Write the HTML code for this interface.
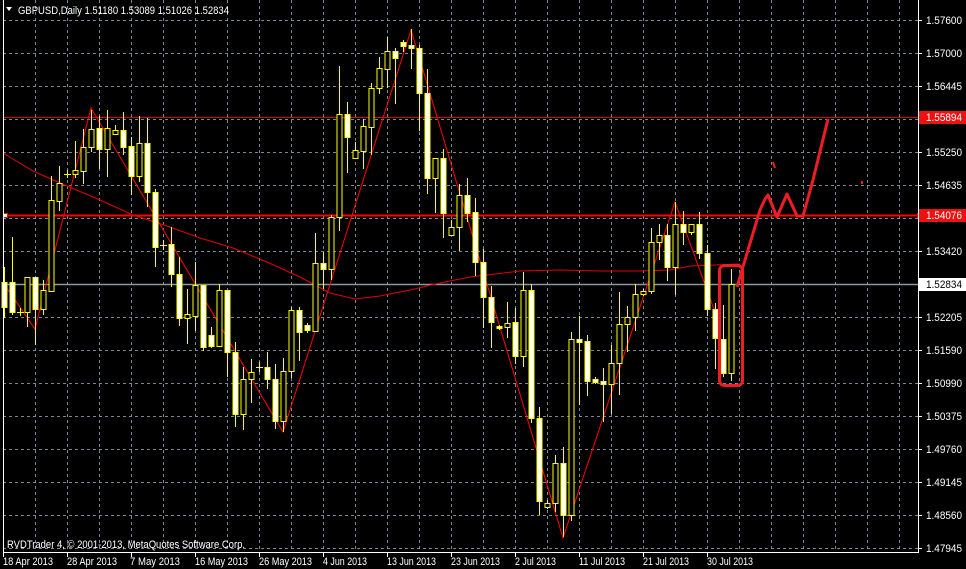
<!DOCTYPE html>
<html><head><meta charset="utf-8"><style>
html,body{margin:0;padding:0;background:#000;}
body{width:966px;height:569px;overflow:hidden;position:relative;font-family:"Liberation Sans",sans-serif;}
svg{position:absolute;left:0;top:0;}
text{font-family:"Liberation Sans",sans-serif;font-size:11px;fill:#fff;}
.g{stroke:#7b8894;stroke-width:1;stroke-dasharray:3,3;}
.wk{stroke:#ffff00;stroke-width:1;}
.w{fill:#fff;stroke:#ffff00;stroke-width:1;}
.h{fill:#000;stroke:#ffff00;stroke-width:1;}
</style></head><body>
<svg width="966" height="569" viewBox="0 0 966 569" xmlns="http://www.w3.org/2000/svg">
<g class="g">
<line x1="3" y1="20.5" x2="918" y2="20.5"/><line x1="3" y1="53.5" x2="918" y2="53.5"/><line x1="3" y1="86.5" x2="918" y2="86.5"/><line x1="3" y1="152.5" x2="918" y2="152.5"/><line x1="3" y1="185.5" x2="918" y2="185.5"/><line x1="3" y1="218.5" x2="918" y2="218.5"/><line x1="3" y1="251.5" x2="918" y2="251.5"/><line x1="3" y1="317.5" x2="918" y2="317.5"/><line x1="3" y1="350.5" x2="918" y2="350.5"/><line x1="3" y1="383.5" x2="918" y2="383.5"/><line x1="3" y1="416.5" x2="918" y2="416.5"/><line x1="3" y1="449.5" x2="918" y2="449.5"/><line x1="3" y1="482.5" x2="918" y2="482.5"/><line x1="3" y1="515.5" x2="918" y2="515.5"/><line x1="3" y1="548.5" x2="918" y2="548.5"/>
<line x1="3" y1="119.5" x2="918" y2="119.5"/>
<line x1="35.5" y1="0" x2="35.5" y2="552"/><line x1="67.5" y1="0" x2="67.5" y2="552"/><line x1="99.5" y1="0" x2="99.5" y2="552"/><line x1="131.5" y1="0" x2="131.5" y2="552"/><line x1="163.5" y1="0" x2="163.5" y2="552"/><line x1="195.5" y1="0" x2="195.5" y2="552"/><line x1="227.5" y1="0" x2="227.5" y2="552"/><line x1="259.5" y1="0" x2="259.5" y2="552"/><line x1="291.5" y1="0" x2="291.5" y2="552"/><line x1="323.5" y1="0" x2="323.5" y2="552"/><line x1="355.5" y1="0" x2="355.5" y2="552"/><line x1="387.5" y1="0" x2="387.5" y2="552"/><line x1="419.5" y1="0" x2="419.5" y2="552"/><line x1="451.5" y1="0" x2="451.5" y2="552"/><line x1="483.5" y1="0" x2="483.5" y2="552"/><line x1="515.5" y1="0" x2="515.5" y2="552"/><line x1="547.5" y1="0" x2="547.5" y2="552"/><line x1="579.5" y1="0" x2="579.5" y2="552"/><line x1="611.5" y1="0" x2="611.5" y2="552"/><line x1="643.5" y1="0" x2="643.5" y2="552"/><line x1="675.5" y1="0" x2="675.5" y2="552"/><line x1="707.5" y1="0" x2="707.5" y2="552"/><line x1="739.5" y1="0" x2="739.5" y2="552"/><line x1="771.5" y1="0" x2="771.5" y2="552"/><line x1="803.5" y1="0" x2="803.5" y2="552"/><line x1="835.5" y1="0" x2="835.5" y2="552"/><line x1="867.5" y1="0" x2="867.5" y2="552"/><line x1="899.5" y1="0" x2="899.5" y2="552"/>
</g>
<line x1="3" y1="117.5" x2="918" y2="117.5" stroke="#e00000" stroke-width="1"/>
<line x1="3" y1="215.5" x2="918" y2="215.5" stroke="#ff0000" stroke-width="2"/>
<line x1="3" y1="284.5" x2="918" y2="284.5" stroke="#8a96a2" stroke-width="1.5"/>
<rect x="3.5" y="213.5" width="4" height="4" fill="#fff" stroke="#f00"/>
<rect x="917.5" y="213.5" width="4" height="4" fill="#fff" stroke="#f00"/>
<polyline fill="none" stroke="#e00000" stroke-width="1" points="3,153 33,171 67,186 100,200 133,215 167,226 200,238 233,248 267,262 300,277 330,293 355,299 380,296 410,290 440,283 470,277 487,275 520,271 560,270 600,271 640,271 670,270 690,266 740,264"/>
<polyline fill="none" stroke="#ff0000" stroke-width="1" points="6,287 35,329 91,108 283,432 411,30 563,538 675,202 715,312"/>
<g>
<line class="wk" x1="4.5" y1="267" x2="4.5" y2="318"/><rect class="w" x="2" y="282.5" width="5" height="25"/>
<line class="wk" x1="12.5" y1="237" x2="12.5" y2="315"/><rect class="w" x="10" y="282.5" width="5" height="30"/>
<line class="wk" x1="20.5" y1="308" x2="20.5" y2="316"/><line class="wk" x1="17" y1="312.5" x2="24" y2="312.5"/>
<line class="wk" x1="27.5" y1="277" x2="27.5" y2="327"/><rect class="h" x="25" y="277.5" width="5" height="35"/>
<line class="wk" x1="35.5" y1="280" x2="35.5" y2="345"/><rect class="w" x="33" y="277.5" width="5" height="32"/>
<line class="wk" x1="43.5" y1="280" x2="43.5" y2="315"/><rect class="h" x="41" y="290.5" width="5" height="19"/>
<line class="wk" x1="51.5" y1="176" x2="51.5" y2="291"/><rect class="h" x="49" y="200.5" width="5" height="91"/>
<line class="wk" x1="59.5" y1="166" x2="59.5" y2="211"/><rect class="h" x="57" y="183.5" width="5" height="18"/>
<line class="wk" x1="67.5" y1="170" x2="67.5" y2="178"/><line class="wk" x1="64" y1="174.5" x2="71" y2="174.5"/>
<line class="wk" x1="75.5" y1="141" x2="75.5" y2="178"/><rect class="h" x="73" y="170.5" width="5" height="4"/>
<line class="wk" x1="83.5" y1="129" x2="83.5" y2="184"/><rect class="h" x="81" y="147.5" width="5" height="24"/>
<line class="wk" x1="91.5" y1="110" x2="91.5" y2="152"/><rect class="h" x="89" y="129.5" width="5" height="18"/>
<line class="wk" x1="99.5" y1="116" x2="99.5" y2="169"/><rect class="w" x="97" y="128.5" width="5" height="21"/>
<line class="wk" x1="107.5" y1="110" x2="107.5" y2="177"/><rect class="h" x="105" y="128.5" width="5" height="21"/>
<line class="wk" x1="115.5" y1="125" x2="115.5" y2="135"/><rect class="h" x="113" y="130.5" width="5" height="4"/>
<line class="wk" x1="123.5" y1="112" x2="123.5" y2="155"/><rect class="w" x="121" y="130.5" width="5" height="17"/>
<line class="wk" x1="131.5" y1="137" x2="131.5" y2="195"/><rect class="w" x="129" y="146.5" width="5" height="30"/>
<line class="wk" x1="139.5" y1="116" x2="139.5" y2="182"/><rect class="h" x="137" y="143.5" width="5" height="33"/>
<line class="wk" x1="147.5" y1="118" x2="147.5" y2="207"/><rect class="w" x="145" y="143.5" width="5" height="49"/>
<line class="wk" x1="155.5" y1="189" x2="155.5" y2="267"/><rect class="w" x="153" y="192.5" width="5" height="55"/>
<line class="wk" x1="163.5" y1="240" x2="163.5" y2="250"/><line class="wk" x1="160" y1="245.5" x2="167" y2="245.5"/>
<line class="wk" x1="171.5" y1="227" x2="171.5" y2="287"/><rect class="w" x="169" y="244.5" width="5" height="30"/>
<line class="wk" x1="179.5" y1="257" x2="179.5" y2="326"/><rect class="w" x="177" y="274.5" width="5" height="44"/>
<line class="wk" x1="187.5" y1="289" x2="187.5" y2="344"/><rect class="h" x="185" y="314.5" width="5" height="4"/>
<line class="wk" x1="195.5" y1="262" x2="195.5" y2="331"/><rect class="h" x="193" y="285.5" width="5" height="31"/>
<line class="wk" x1="203.5" y1="285" x2="203.5" y2="351"/><rect class="w" x="201" y="285.5" width="5" height="62"/>
<line class="wk" x1="211.5" y1="327" x2="211.5" y2="348"/><rect class="w" x="209" y="335.5" width="5" height="11"/>
<line class="wk" x1="219.5" y1="284" x2="219.5" y2="346"/><rect class="h" x="217" y="290.5" width="5" height="56"/>
<line class="wk" x1="227.5" y1="290" x2="227.5" y2="377"/><rect class="w" x="225" y="290.5" width="5" height="62"/>
<line class="wk" x1="235.5" y1="342" x2="235.5" y2="427"/><rect class="w" x="233" y="352.5" width="5" height="62"/>
<line class="wk" x1="243.5" y1="367" x2="243.5" y2="430"/><rect class="h" x="241" y="379.5" width="5" height="35"/>
<line class="wk" x1="251.5" y1="359" x2="251.5" y2="403"/><rect class="h" x="249" y="372.5" width="5" height="7"/>
<line class="wk" x1="259.5" y1="362" x2="259.5" y2="372"/><line class="wk" x1="256" y1="367.5" x2="263" y2="367.5"/>
<line class="wk" x1="267.5" y1="352" x2="267.5" y2="389"/><rect class="w" x="265" y="367.5" width="5" height="12"/>
<line class="wk" x1="275.5" y1="364" x2="275.5" y2="429"/><rect class="w" x="273" y="379.5" width="5" height="42"/>
<line class="wk" x1="283.5" y1="358" x2="283.5" y2="432"/><rect class="h" x="281" y="371.5" width="5" height="50"/>
<line class="wk" x1="291.5" y1="307" x2="291.5" y2="378"/><rect class="h" x="289" y="310.5" width="5" height="61"/>
<line class="wk" x1="299.5" y1="307" x2="299.5" y2="361"/><rect class="w" x="297" y="310.5" width="5" height="22"/>
<line class="wk" x1="307.5" y1="323" x2="307.5" y2="333"/><rect class="w" x="305" y="325.5" width="5" height="5"/>
<line class="wk" x1="315.5" y1="233" x2="315.5" y2="331"/><rect class="h" x="313" y="263.5" width="5" height="68"/>
<line class="wk" x1="323.5" y1="252" x2="323.5" y2="289"/><rect class="w" x="321" y="263.5" width="5" height="6"/>
<line class="wk" x1="331.5" y1="215" x2="331.5" y2="280"/><rect class="h" x="329" y="217.5" width="5" height="52"/>
<line class="wk" x1="339.5" y1="66" x2="339.5" y2="231"/><rect class="h" x="337" y="114.5" width="5" height="103"/>
<line class="wk" x1="347.5" y1="102" x2="347.5" y2="173"/><rect class="w" x="345" y="114.5" width="5" height="23"/>
<line class="wk" x1="355.5" y1="142" x2="355.5" y2="158"/><rect class="h" x="353" y="150.5" width="5" height="8"/>
<line class="wk" x1="363.5" y1="119" x2="363.5" y2="169"/><rect class="h" x="361" y="126.5" width="5" height="25"/>
<line class="wk" x1="371.5" y1="83" x2="371.5" y2="155"/><rect class="h" x="369" y="88.5" width="5" height="39"/>
<line class="wk" x1="379.5" y1="57" x2="379.5" y2="94"/><rect class="h" x="377" y="68.5" width="5" height="20"/>
<line class="wk" x1="387.5" y1="37" x2="387.5" y2="88"/><rect class="h" x="385" y="51.5" width="5" height="18"/>
<line class="wk" x1="395.5" y1="48" x2="395.5" y2="104"/><rect class="w" x="393" y="51.5" width="5" height="7"/>
<line class="wk" x1="403.5" y1="40" x2="403.5" y2="52"/><rect class="w" x="401" y="42.5" width="5" height="4"/>
<line class="wk" x1="411.5" y1="29" x2="411.5" y2="69"/><rect class="w" x="409" y="45.5" width="5" height="3"/>
<line class="wk" x1="419.5" y1="45" x2="419.5" y2="131"/><rect class="w" x="417" y="48.5" width="5" height="45"/>
<line class="wk" x1="427.5" y1="69" x2="427.5" y2="194"/><rect class="w" x="425" y="93.5" width="5" height="85"/>
<line class="wk" x1="435.5" y1="158" x2="435.5" y2="213"/><rect class="h" x="433" y="158.5" width="5" height="20"/>
<line class="wk" x1="443.5" y1="149" x2="443.5" y2="238"/><rect class="w" x="441" y="158.5" width="5" height="55"/>
<line class="wk" x1="451.5" y1="220" x2="451.5" y2="236"/><rect class="h" x="449" y="227.5" width="5" height="8"/>
<line class="wk" x1="459.5" y1="184" x2="459.5" y2="251"/><rect class="h" x="457" y="195.5" width="5" height="32"/>
<line class="wk" x1="467.5" y1="178" x2="467.5" y2="222"/><rect class="w" x="465" y="195.5" width="5" height="18"/>
<line class="wk" x1="475.5" y1="198" x2="475.5" y2="276"/><rect class="w" x="473" y="212.5" width="5" height="50"/>
<line class="wk" x1="483.5" y1="249" x2="483.5" y2="328"/><rect class="w" x="481" y="262.5" width="5" height="35"/>
<line class="wk" x1="491.5" y1="286" x2="491.5" y2="348"/><rect class="w" x="489" y="297.5" width="5" height="25"/>
<line class="wk" x1="499.5" y1="325" x2="499.5" y2="330"/><rect class="w" x="497" y="326.5" width="5" height="2"/>
<line class="wk" x1="507.5" y1="302" x2="507.5" y2="338"/><rect class="h" x="505" y="323.5" width="5" height="4"/>
<line class="wk" x1="515.5" y1="308" x2="515.5" y2="364"/><rect class="w" x="513" y="322.5" width="5" height="34"/>
<line class="wk" x1="523.5" y1="272" x2="523.5" y2="367"/><rect class="h" x="521" y="290.5" width="5" height="66"/>
<line class="wk" x1="531.5" y1="284" x2="531.5" y2="423"/><rect class="w" x="529" y="290.5" width="5" height="128"/>
<line class="wk" x1="539.5" y1="407" x2="539.5" y2="515"/><rect class="w" x="537" y="418.5" width="5" height="83"/>
<line class="wk" x1="547.5" y1="500" x2="547.5" y2="509"/><rect class="h" x="545" y="503.5" width="5" height="4"/>
<line class="wk" x1="555.5" y1="455" x2="555.5" y2="512"/><rect class="h" x="553" y="463.5" width="5" height="40"/>
<line class="wk" x1="563.5" y1="447" x2="563.5" y2="537"/><rect class="w" x="561" y="463.5" width="5" height="52"/>
<line class="wk" x1="571.5" y1="332" x2="571.5" y2="521"/><rect class="h" x="569" y="339.5" width="5" height="176"/>
<line class="wk" x1="579.5" y1="316" x2="579.5" y2="405"/><rect class="w" x="577" y="339.5" width="5" height="3"/>
<line class="wk" x1="587.5" y1="335" x2="587.5" y2="396"/><rect class="w" x="585" y="341.5" width="5" height="40"/>
<line class="wk" x1="595.5" y1="377" x2="595.5" y2="384"/><rect class="w" x="593" y="379.5" width="5" height="3"/>
<line class="wk" x1="603.5" y1="368" x2="603.5" y2="422"/><rect class="w" x="601" y="381.5" width="5" height="3"/>
<line class="wk" x1="611.5" y1="345" x2="611.5" y2="414"/><rect class="h" x="609" y="363.5" width="5" height="21"/>
<line class="wk" x1="619.5" y1="292" x2="619.5" y2="395"/><rect class="h" x="617" y="324.5" width="5" height="39"/>
<line class="wk" x1="627.5" y1="306" x2="627.5" y2="352"/><rect class="h" x="625" y="317.5" width="5" height="7"/>
<line class="wk" x1="635.5" y1="284" x2="635.5" y2="331"/><rect class="h" x="633" y="294.5" width="5" height="23"/>
<line class="wk" x1="643.5" y1="289" x2="643.5" y2="296"/><rect class="h" x="641" y="291.5" width="5" height="3"/>
<line class="wk" x1="651.5" y1="228" x2="651.5" y2="294"/><rect class="h" x="649" y="242.5" width="5" height="49"/>
<line class="wk" x1="659.5" y1="224" x2="659.5" y2="260"/><rect class="h" x="657" y="235.5" width="5" height="7"/>
<line class="wk" x1="667.5" y1="224" x2="667.5" y2="281"/><rect class="w" x="665" y="235.5" width="5" height="32"/>
<line class="wk" x1="675.5" y1="202" x2="675.5" y2="295"/><rect class="h" x="673" y="224.5" width="5" height="43"/>
<line class="wk" x1="683.5" y1="211" x2="683.5" y2="245"/><rect class="w" x="681" y="224.5" width="5" height="8"/>
<line class="wk" x1="691.5" y1="224" x2="691.5" y2="235"/><rect class="h" x="689" y="224.5" width="5" height="8"/>
<line class="wk" x1="699.5" y1="212" x2="699.5" y2="259"/><rect class="w" x="697" y="224.5" width="5" height="29"/>
<line class="wk" x1="707.5" y1="245" x2="707.5" y2="316"/><rect class="w" x="705" y="253.5" width="5" height="56"/>
<line class="wk" x1="715.5" y1="303" x2="715.5" y2="369"/><rect class="w" x="713" y="309.5" width="5" height="29"/>
<line class="wk" x1="723.5" y1="305" x2="723.5" y2="377"/><rect class="w" x="721" y="339.5" width="5" height="34"/>
<line class="wk" x1="731.5" y1="269" x2="731.5" y2="381"/><rect class="h" x="729" y="284.5" width="5" height="89"/>
</g>
<rect x="719.5" y="265.5" width="23" height="120" rx="5" fill="none" stroke="#ee1c24" stroke-width="3"/>
<polyline fill="none" stroke="#ee1c24" stroke-width="3" stroke-linejoin="round" points="737,287 742,270 760,210 765,199 768,195 777,217 787,194 797,216 803,216 813,180 828,119"/>
<line x1="773" y1="162" x2="775" y2="168" stroke="#ee1c24" stroke-width="2"/>
<rect x="861" y="181" width="2" height="3" fill="#ee1c24"/>
<line x1="3.5" y1="0" x2="3.5" y2="552" stroke="#fff"/>
<line x1="918.5" y1="0" x2="918.5" y2="553" stroke="#fff"/>
<line x1="3" y1="552.5" x2="918" y2="552.5" stroke="#fff"/>
<g stroke="#fff">
<line x1="3.5" y1="552" x2="3.5" y2="557"/><line x1="67.5" y1="552" x2="67.5" y2="557"/><line x1="131.5" y1="552" x2="131.5" y2="557"/><line x1="195.5" y1="552" x2="195.5" y2="557"/><line x1="259.5" y1="552" x2="259.5" y2="557"/><line x1="323.5" y1="552" x2="323.5" y2="557"/><line x1="387.5" y1="552" x2="387.5" y2="557"/><line x1="451.5" y1="552" x2="451.5" y2="557"/><line x1="515.5" y1="552" x2="515.5" y2="557"/><line x1="579.5" y1="552" x2="579.5" y2="557"/><line x1="643.5" y1="552" x2="643.5" y2="557"/><line x1="707.5" y1="552" x2="707.5" y2="557"/>
<line x1="918" y1="20.5" x2="922" y2="20.5"/><line x1="918" y1="53.5" x2="922" y2="53.5"/><line x1="918" y1="86.5" x2="922" y2="86.5"/><line x1="918" y1="152.5" x2="922" y2="152.5"/><line x1="918" y1="185.5" x2="922" y2="185.5"/><line x1="918" y1="251.5" x2="922" y2="251.5"/><line x1="918" y1="317.5" x2="922" y2="317.5"/><line x1="918" y1="350.5" x2="922" y2="350.5"/><line x1="918" y1="383.5" x2="922" y2="383.5"/><line x1="918" y1="416.5" x2="922" y2="416.5"/><line x1="918" y1="449.5" x2="922" y2="449.5"/><line x1="918" y1="482.5" x2="922" y2="482.5"/><line x1="918" y1="515.5" x2="922" y2="515.5"/><line x1="918" y1="548.5" x2="922" y2="548.5"/>
</g>
<rect x="919" y="111" width="47" height="13" fill="#ee1111"/>
<rect x="919" y="209" width="47" height="13" fill="#ee1111"/>
<rect x="919" y="278" width="47" height="13" fill="#fff"/>
<g>
<text x="926" y="24" textLength="36" lengthAdjust="spacingAndGlyphs">1.57600</text><text x="926" y="57" textLength="36" lengthAdjust="spacingAndGlyphs">1.57000</text><text x="926" y="90" textLength="36" lengthAdjust="spacingAndGlyphs">1.56445</text><text x="926" y="121" textLength="36" lengthAdjust="spacingAndGlyphs">1.55894</text><text x="926" y="156" textLength="36" lengthAdjust="spacingAndGlyphs">1.55250</text><text x="926" y="189" textLength="36" lengthAdjust="spacingAndGlyphs">1.54635</text><text x="926" y="219" textLength="36" lengthAdjust="spacingAndGlyphs">1.54076</text><text x="926" y="255" textLength="36" lengthAdjust="spacingAndGlyphs">1.53420</text><text x="926" y="288" style="fill:#000" textLength="36" lengthAdjust="spacingAndGlyphs">1.52834</text><text x="926" y="321" textLength="36" lengthAdjust="spacingAndGlyphs">1.52205</text><text x="926" y="354" textLength="36" lengthAdjust="spacingAndGlyphs">1.51590</text><text x="926" y="387" textLength="36" lengthAdjust="spacingAndGlyphs">1.50990</text><text x="926" y="420" textLength="36" lengthAdjust="spacingAndGlyphs">1.50375</text><text x="926" y="453" textLength="36" lengthAdjust="spacingAndGlyphs">1.49760</text><text x="926" y="486" textLength="36" lengthAdjust="spacingAndGlyphs">1.49145</text><text x="926" y="519" textLength="36" lengthAdjust="spacingAndGlyphs">1.48560</text><text x="926" y="552" textLength="36" lengthAdjust="spacingAndGlyphs">1.47945</text>
</g>
<g>
<text x="3" y="565" textLength="50" lengthAdjust="spacingAndGlyphs">18 Apr 2013</text><text x="67" y="565" textLength="50" lengthAdjust="spacingAndGlyphs">28 Apr 2013</text><text x="130" y="565" textLength="50" lengthAdjust="spacingAndGlyphs">7 May 2013</text><text x="195" y="565" textLength="53" lengthAdjust="spacingAndGlyphs">16 May 2013</text><text x="259" y="565" textLength="53" lengthAdjust="spacingAndGlyphs">26 May 2013</text><text x="323" y="565" textLength="44" lengthAdjust="spacingAndGlyphs">4 Jun 2013</text><text x="387" y="565" textLength="49" lengthAdjust="spacingAndGlyphs">13 Jun 2013</text><text x="451" y="565" textLength="49" lengthAdjust="spacingAndGlyphs">23 Jun 2013</text><text x="515" y="565" textLength="41" lengthAdjust="spacingAndGlyphs">2 Jul 2013</text><text x="579" y="565" textLength="46" lengthAdjust="spacingAndGlyphs">11 Jul 2013</text><text x="643" y="565" textLength="46" lengthAdjust="spacingAndGlyphs">21 Jul 2013</text><text x="707" y="565" textLength="46" lengthAdjust="spacingAndGlyphs">30 Jul 2013</text>
</g>
<polygon points="6,7 12,7 9,11" fill="#fff"/>
<text x="18" y="14" textLength="211" lengthAdjust="spacingAndGlyphs">GBPUSD,Daily  1.51180 1.53089 1.51026 1.52834</text>
<text x="7" y="548" textLength="238" lengthAdjust="spacingAndGlyphs">RVDTrader 4, © 2001-2013, MetaQuotes Software Corp.</text>
</svg>
</body></html>
